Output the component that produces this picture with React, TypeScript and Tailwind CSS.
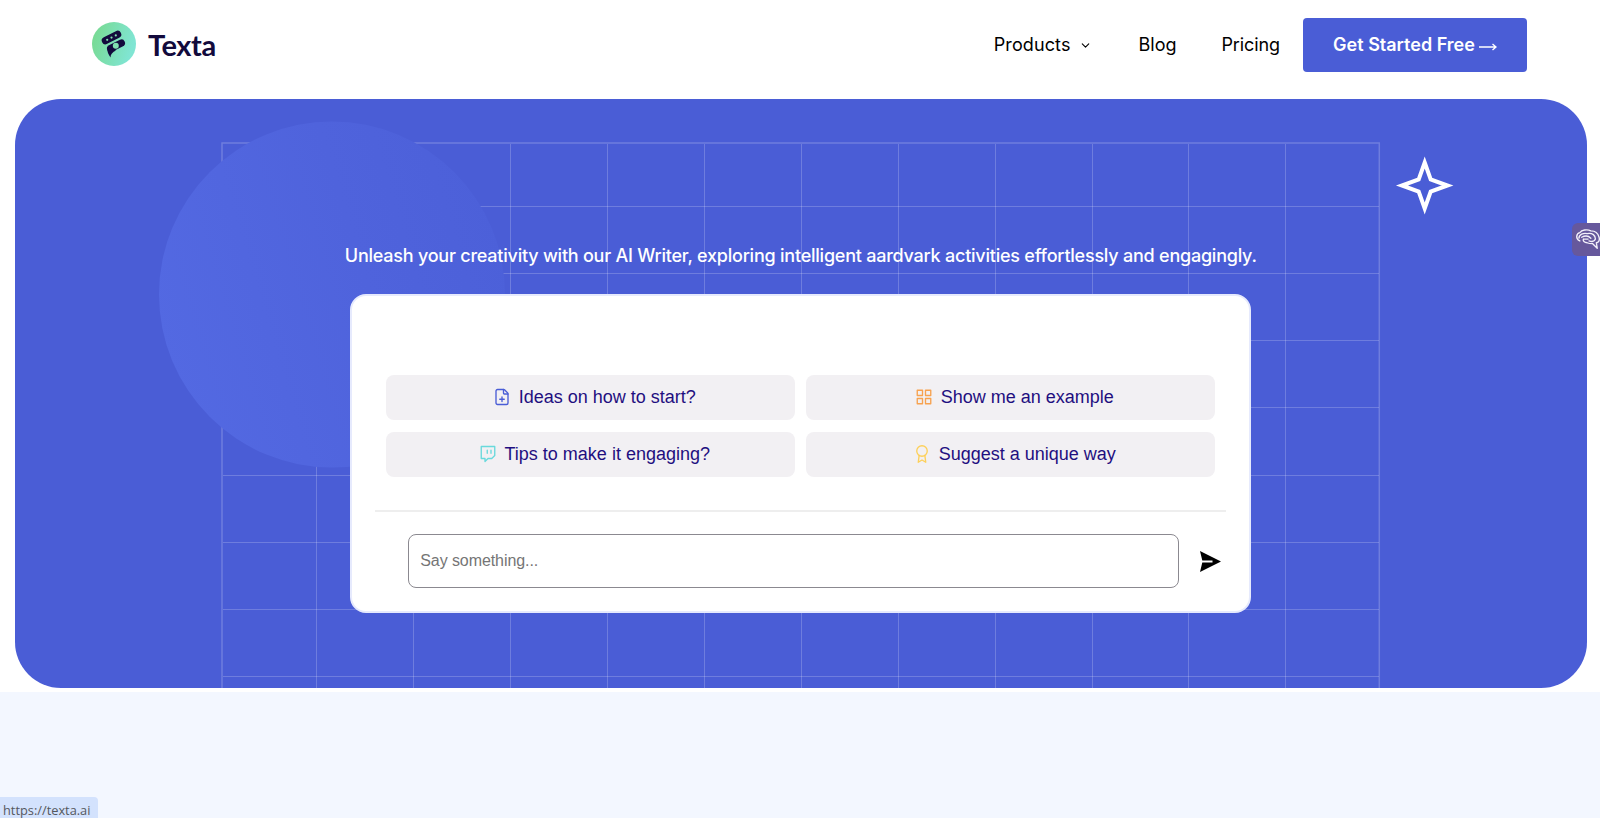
import { ChevronDown, FilePlus } from 'lucide-react';
import { FiAward, FiGrid, FiTwitch } from 'react-icons/fi';

const COLUMNS = [316.5, 413.5, 510.5, 607.5, 704.5, 801.5, 898.5, 995.5, 1092.5, 1188.5, 1285.5];
const ROWS = [206.5, 273.5, 340.5, 407.5, 475.5, 542.5, 609.5, 676.5];

const SUGGESTIONS = [
  { label: 'Ideas on how to start?', Icon: FilePlus, color: 'text-[#4a5dd6]' },
  { label: 'Show me an example', Icon: FiGrid, color: 'text-[#f7a24f]' },
  { label: 'Tips to make it engaging?', Icon: FiTwitch, color: 'text-[#69d9dc]' },
  { label: 'Suggest a unique way', Icon: FiAward, color: 'text-[#fdd05a]' },
];

function Logo() {
  return (
    <a className="flex items-center" href="#">
      <svg width="44" height="44" viewBox="0 0 44 44">
        <defs>
          <linearGradient id="logo" x1="0" y1="0" x2="1" y2="0.3">
            <stop offset="0" stopColor="#77d98c" />
            <stop offset="1" stopColor="#80e5d3" />
          </linearGradient>
        </defs>
        <circle cx="22" cy="22" r="22" fill="url(#logo)" />
        <g stroke="#120a3c" strokeLinecap="round">
          <path d="M13.5 18.5 25.5 12.5" strokeWidth="7.5" />
          <path d="M18.5 26.5 29.5 21" strokeWidth="7" />
        </g>
        <path d="M15 25.5c0 4 1.5 7 3.500 10 0-3 2-5.500 5.500-7z" fill="#120a3c" />
        <g fill="#80dfb0">
          <circle cx="15.2" cy="17.8" r="1.1" />
          <circle cx="19.5" cy="15.6" r="1.1" />
          <circle cx="23.8" cy="13.4" r="1.1" />
          <circle cx="23.8" cy="23.7" r="3" />
        </g>
      </svg>
      <span className="ml-3 font-['Lato',sans-serif] text-[29px] leading-none font-bold tracking-[-0.4px] text-[#120a3c]">
        Texta
      </span>
    </a>
  );
}

function Header() {
  return (
    <header className="flex h-[98px] justify-between pr-[73px] pl-[92px]">
      <div className="flex h-[88px] items-center">
        <Logo />
      </div>
      <nav className="flex h-[89px] items-center text-lg text-black">
        <a className="flex items-center gap-2 pt-px" href="#">
          <span className="tracking-[0.1px]">Products</span>
          <ChevronDown size={13} strokeWidth={2} />
        </a>
        <a className="ml-[47px] pt-px" href="#">Blog</a>
        <a className="ml-[45px] pt-px tracking-[-0.1px]" href="#">Pricing</a>
        <a
          className="ml-[23px] flex h-[54px] w-[224px] items-center justify-center gap-1 rounded bg-[#4a5dd6] pt-px font-semibold whitespace-nowrap text-white"
          href="#"
        >
          Get Started Free
          <svg width="18" height="10" viewBox="0 0 18 10" fill="none" stroke="currentColor" strokeWidth="1.4" className="mt-1">
            <path d="M0 5H17M13.5 2 17 5 13.5 8" />
          </svg>
        </a>
      </nav>
    </header>
  );
}

function HeroBackdrop() {
  return (
    <svg className="absolute inset-0" width="1572" height="590" viewBox="15 99 1572 590">
      <defs>
        <linearGradient id="orb" x1="0" y1="0.65" x2="1" y2="0.35">
          <stop offset="0" stopColor="#5369e2" />
          <stop offset="0.6" stopColor="#4f63dc" />
          <stop offset="1" stopColor="#4c60d9" />
        </linearGradient>
      </defs>
      <g fill="none" stroke="#fff" strokeOpacity="0.2">
        <path d="M222 690V143H1379.3V690" strokeWidth="1.5" />
        {COLUMNS.map((x) => (
          <path key={x} d={`M${x} 144V690`} />
        ))}
        {ROWS.map((y) => (
          <path key={y} d={`M223 ${y}H1379`} />
        ))}
      </g>
      <circle cx="332" cy="294.5" r="173" fill="url(#orb)" />
      <path
        d="M1424.7 162.5 1430.7 179.5 1447.5 185.5 1430.7 191.5 1424.7 208.5 1418.7 191.5 1401.9 185.5 1418.7 179.5z"
        fill="none"
        stroke="#fff"
        strokeWidth="4"
      />
    </svg>
  );
}

function PromptCard() {
  return (
    <div className="relative mx-auto mt-[25px] h-[319px] w-[901px] rounded-2xl border-2 border-[#e6eafd] bg-white pt-[79px] font-['Liberation_Sans',sans-serif]">
      <div className="mx-[34px] grid grid-cols-2 gap-x-[11px] gap-y-3">
        {SUGGESTIONS.map(({ label, Icon, color }) => (
          <button
            key={label}
            className="flex h-[45px] items-center justify-center gap-2 rounded-lg bg-[#f2f0f3] pb-px pl-[7px] text-lg text-[#1f0f80]"
          >
            <Icon size={18} strokeWidth={1.8} className={color} />
            {label}
          </button>
        ))}
      </div>
      <div className="mx-[23px] mt-[33px] border-t-2 border-[#eeeeee]" />
      <div className="mt-[22px] ml-[56px] flex items-center">
        <input
          className="h-[54px] w-[771px] rounded-lg border border-[#8b8990] px-[11px] text-base tracking-[-0.08px] placeholder:text-[#757575]"
          placeholder="Say something..."
        />
        <svg className="mt-px ml-[21px]" width="21" height="21" viewBox="0 0 21 21">
          <path d="M0 0 21 10.5 0 21 2.3 11.6H12.5V9.6H2.3z" fill="#000" />
        </svg>
      </div>
    </div>
  );
}

function SideTab() {
  return (
    <div className="absolute top-[223px] right-0 flex h-[33px] w-[28px] items-center overflow-hidden rounded-l-md bg-[#66589c] pl-1">
      <svg className="shrink-0" width="26" height="22" viewBox="0 0 28 24" fill="none" stroke="#f2effa" strokeWidth="1.5" strokeLinecap="round" strokeLinejoin="round">
        <path d="M4 13C-1 11 0 5 4 4c2-3 8-4 12-2 5 0 8 3 9 7 1 4-1 6-3 6l1 6-5-5c-2 0-4 0-6-1-3 0-5-2-4-4" />
        <path d="M3 10c0-4 5-6 9-5 6-1 9 2 9 6-1 3-4 3-7 2" />
        <path d="M6 9c4-2 8-1 10 1M9 11h4" />
      </svg>
    </div>
  );
}

export default function App() {
  return (
    <div className="relative flex h-[818px] flex-col overflow-hidden bg-white font-['Inter',sans-serif]">
      <Header />
      <main className="relative mt-[0.5px] mr-[13.5px] ml-[15px] h-[589.5px] shrink-0 overflow-hidden rounded-[46px] bg-[#4a5dd6]">
        <HeroBackdrop />
        <h1 className="relative mt-[143px] text-center text-lg leading-[27px] font-medium tracking-[-0.23px] whitespace-nowrap text-white">
          Unleash your creativity with our AI Writer, exploring intelligent aardvark activities effortlessly and engagingly.
        </h1>
        <PromptCard />
      </main>
      <section className="mt-1 flex flex-1 items-end bg-[#f3f7ff]">
        <div className="h-[21px] w-[98px] rounded-tr bg-[#d3e2fd] pl-[3px] font-['Open_Sans',sans-serif] text-[12.8px] leading-[26px] text-[#55585e]">
          https://texta.ai
        </div>
      </section>
      <SideTab />
    </div>
  );
}
